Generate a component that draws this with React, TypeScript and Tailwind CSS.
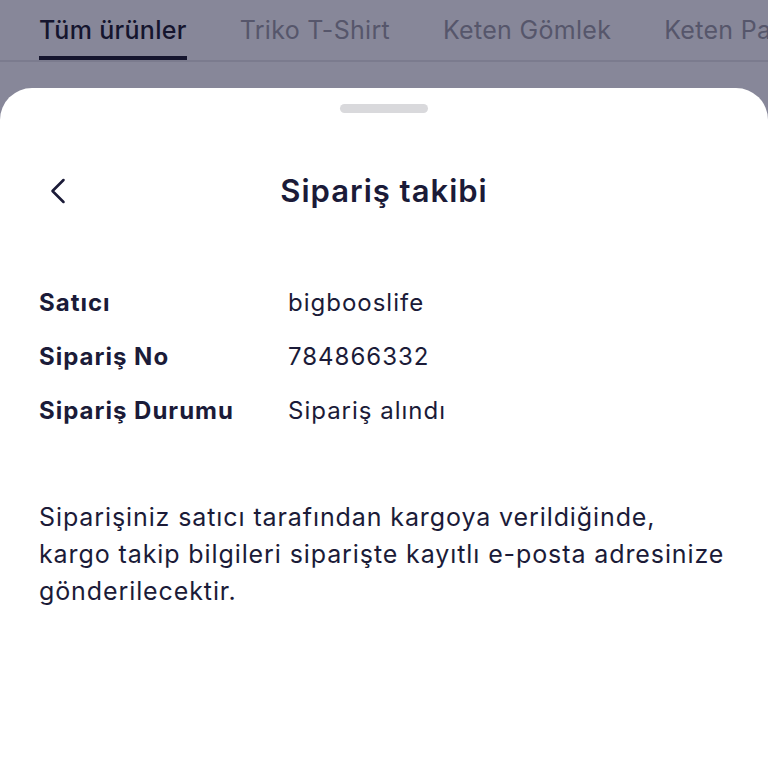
import { ChevronLeft } from "lucide-react";

const rows = [
  { label: "Satıcı", value: "bigbooslife" },
  { label: "Sipariş No", value: "784866332" },
  { label: "Sipariş Durumu", value: "Sipariş alındı" },
];

const tabs = ["Tüm ürünler", "Triko T-Shirt", "Keten Gömlek", "Keten Pantolon"];

export default function App() {
  return (
    <main
      className="w-[768px] h-[768px] overflow-hidden bg-[#878799] flex flex-col"
      style={{ fontFamily: "Inter, 'Noto Sans', sans-serif" }}
    >
      {/* tab bar under the overlay */}
      <div className="h-[62px] border-b-2 border-[#7b7b8e] flex gap-[53px] pl-[39px] whitespace-nowrap shrink-0 overflow-hidden">
        {tabs.map((t, i) => (
          <div
            key={t}
            className={`relative pt-[12px] text-[25px] tracking-[0.3px] ${
              i === 0 ? "text-[#15152e] font-medium" : "text-[#56566b]"
            }`}
          >
            {t}
            {i === 0 && (
              <div className="absolute left-0 right-0 top-[56px] h-[4px] bg-[#15152e]" />
            )}
          </div>
        ))}
      </div>

      <div className="mt-[26px] flex-1 bg-white rounded-t-[32px] flex flex-col text-[#1b1b38]">
        <div className="flex justify-center pt-[16px]">
          <div className="w-[88px] h-[9px] rounded-full bg-[#d9d9dc]" />
        </div>

        <div className="relative flex items-center justify-center mt-[58px] h-[40px]">
          <ChevronLeft
            className="absolute left-[36px] w-[44px] h-[44px]"
            strokeWidth={1.4}
          />
          <h1 className="text-[31px] font-semibold tracking-[1px]">Sipariş takibi</h1>
        </div>

        <div className="mt-[76px] px-[39px] flex flex-col gap-[22px] text-[24px] tracking-[1px]">
          {rows.map((r) => (
            <div key={r.label} className="flex items-center h-[32px]">
              <div className="w-[249px] font-bold">{r.label}</div>
              <div>{r.value}</div>
            </div>
          ))}
        </div>

        <p className="mt-[72px] px-[39px] text-[25px] leading-[37px] tracking-[0.9px] whitespace-nowrap">
          Siparişiniz satıcı tarafından kargoya verildiğinde,
          <br />
          kargo takip bilgileri siparişte kayıtlı e-posta adresinize
          <br />
          gönderilecektir.
        </p>
      </div>
    </main>
  );
}
